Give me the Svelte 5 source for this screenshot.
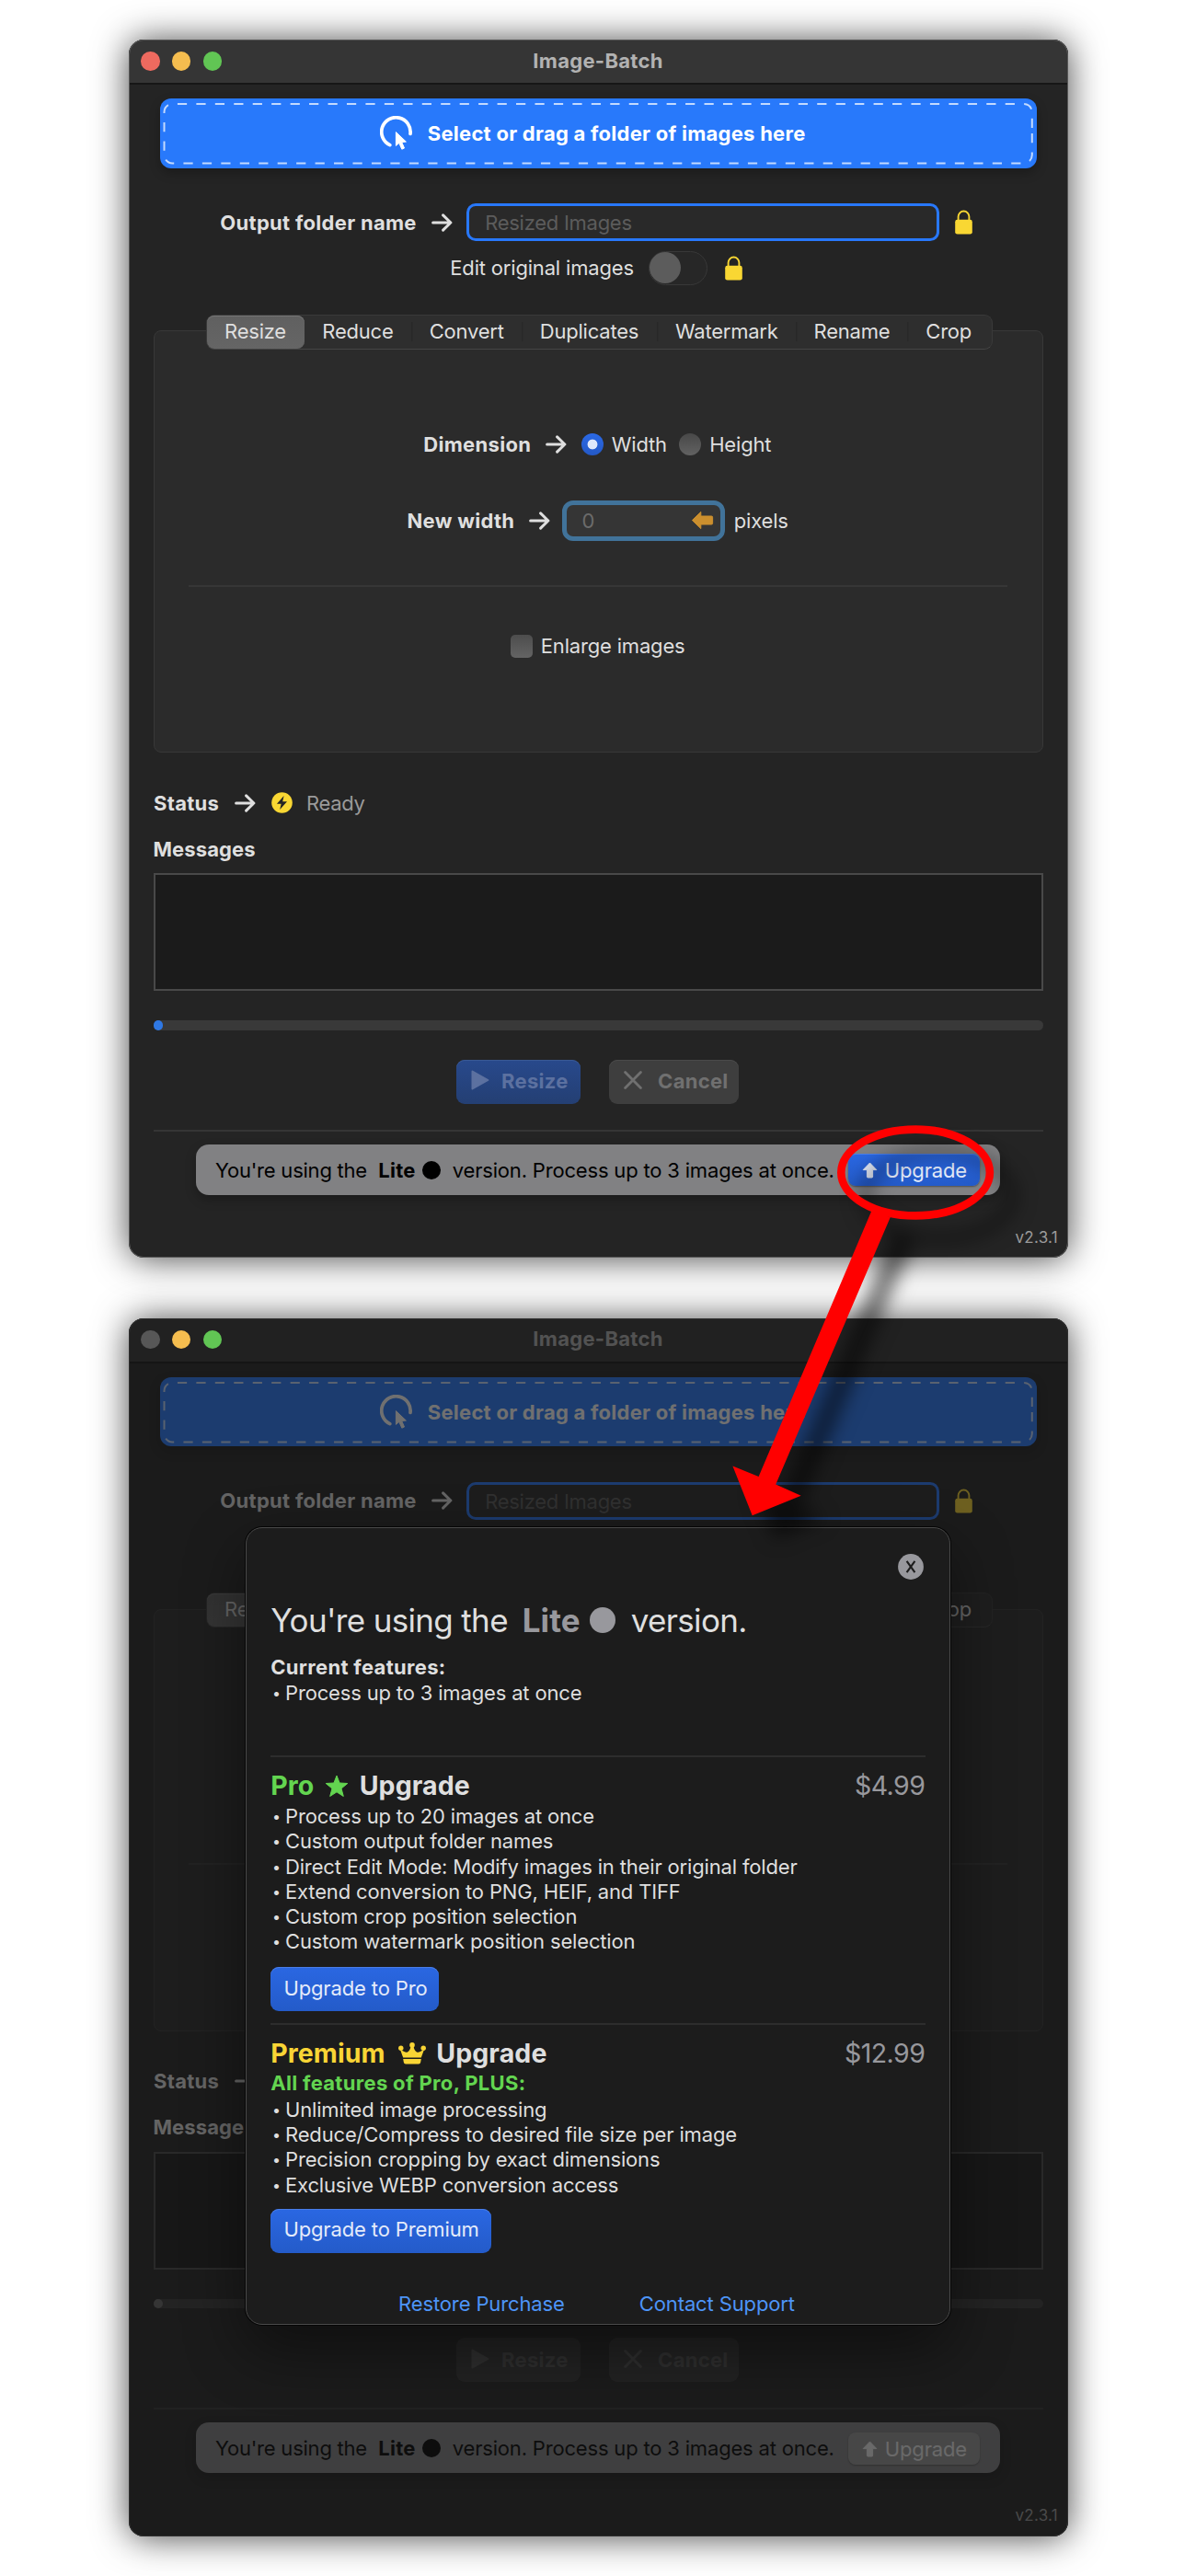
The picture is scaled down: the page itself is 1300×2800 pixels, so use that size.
<script>
  const tabs = ['Resize', 'Reduce', 'Convert', 'Duplicates', 'Watermark', 'Rename', 'Crop'];

  const proFeatures = [
    'Process up to 20 images at once',
    'Custom output folder names',
    'Direct Edit Mode: Modify images in their original folder',
    'Extend conversion to PNG, HEIF, and TIFF',
    'Custom crop position selection',
    'Custom watermark position selection'
  ];

  const premiumFeatures = [
    'Unlimited image processing',
    'Reduce/Compress to desired file size per image',
    'Precision cropping by exact dimensions',
    'Exclusive WEBP conversion access'
  ];
</script>

{#snippet arrow()}
  <svg class="arrow" width="23" height="20" viewBox="0 0 23 20">
    <path d="M1.6 10H20.6M12.6 1.9L20.9 10L12.6 18.1" />
  </svg>
{/snippet}

{#snippet lock()}
  <svg class="lock" width="19" height="27" viewBox="0 0 19 27">
    <path class="shackle" d="M3.6 12V7.6a5.9 6.1 0 0 1 11.8 0V12" />
    <rect x="0.2" y="10.8" width="18.6" height="15.8" rx="2.4" />
  </svg>
{/snippet}

{#snippet features(items)}
  <ul>
    {#each items as item}
      <li><span class="bullet">•</span>{item}</li>
    {/each}
  </ul>
{/snippet}

{#snippet appWindow(locked)}
  <header class="titlebar">
    <div class="lights">
      <i class="light" class:red={!locked} class:off={locked}></i>
      <i class="light yellow"></i>
      <i class="light green"></i>
    </div>
    <b class="title">Image-Batch</b>
  </header>

  <div class="drop">
    <svg class="dashes" width="953" height="76" viewBox="0 0 953 76">
      <path d="M947.8 38V61.5a9 9 0 0 1 -9 9H13.5a9 9 0 0 1 -9 -9V14.9a9 9 0 0 1 9 -9H938.8a9 9 0 0 1 9 9V38" />
    </svg>
    <svg class="pick" width="36" height="38" viewBox="0 0 36 38">
      <path class="ring" d="M33 19.4A15.7 15.7 0 1 0 10.8 31.6" />
      <path class="pointer" d="M17.4 17.6V32.4L20.8 29.5L23.8 36.2L26.5 35L23.7 28.5L28.4 28.1Z" />
    </svg>
    <b>Select or drag a folder of images here</b>
  </div>

  <div class="output">
    <b>Output folder name</b>
    {@render arrow()}
    <div class="field">Resized Images</div>
    {@render lock()}
  </div>

  <div class="edit">
    <span>Edit original images</span>
    <div class="toggle"><i></i></div>
    {@render lock()}
  </div>

  <nav class="tabs">
    {#each tabs as tab, i}
      <div class="tab" class:active={i === 0} class:ruled={i > 1}><span>{tab}</span></div>
    {/each}
  </nav>

  <section class="panel">
    <div class="dimension">
      <b>Dimension</b>
      {@render arrow()}
      <i class="radio on"></i>
      <span class="w">Width</span>
      <i class="radio"></i>
      <span>Height</span>
    </div>
    <div class="new-width">
      <b>New width</b>
      {@render arrow()}
      <div class="number">
        <span>0</span>
        <svg width="25" height="21" viewBox="0 0 25 21">
          <path d="M1.4 10.5L10.8 1.4V6H22.4Q23.6 6 23.6 7.2V13.8Q23.6 15 22.4 15H10.8V19.6Z" />
        </svg>
      </div>
      <span class="unit">pixels</span>
    </div>
    <hr />
    <div class="enlarge">
      <i class="check"></i>
      <span>Enlarge images</span>
    </div>
  </section>

  <div class="status">
    <b>Status</b>
    {@render arrow()}
    <svg class="bolt" width="23" height="23" viewBox="0 0 23 23">
      <circle cx="11.5" cy="11.5" r="11.3" />
      <path d="M13.6 3.9L5.9 12.7H10.6L9.2 19.1L17 10.3H12.2Z" />
    </svg>
    <span>Ready</span>
  </div>

  <b class="messages-label">Messages</b>
  <div class="messages"></div>
  <div class="progress"><i class:idle={locked}></i></div>

  <div class="actions">
    <div class="action run" class:inactive={locked}>
      <svg width="20" height="22" viewBox="0 0 20 22">
        <path d="M1.5 1.5L18.4 11L1.5 20.5Z" />
      </svg>
      <b>Resize</b>
    </div>
    <div class="action cancel" class:inactive={locked}>
      <svg width="20" height="20" viewBox="0 0 20 20">
        <path d="M1.6 1.6L18.4 18.4M18.4 1.6L1.6 18.4" />
      </svg>
      <b>Cancel</b>
    </div>
  </div>

  <hr class="rule" />

  <div class="banner">
    <span class="using">You're using the</span>
    <b>Lite</b>
    <i class="dot"></i>
    <span class="limit">version. Process up to 3 images at once.</span>
    <div class="upgrade" class:inactive={locked}>
      <svg width="17" height="18" viewBox="0 0 17 18">
        <path d="M8.5 1L15.8 8.6H11.6V16Q11.6 17 10.6 17H6.4Q5.4 17 5.4 16V8.6H1.2Z" />
      </svg>
      <span>Upgrade</span>
    </div>
  </div>
  <div class="version">v2.3.1</div>
{/snippet}

<main>
  <article class="window">{@render appWindow(false)}</article>

  <article class="window">
    {@render appWindow(true)}
    <div class="veil"></div>

    <aside class="modal">
      <div class="close">
        <svg width="28" height="28" viewBox="0 0 28 28">
          <circle cx="14" cy="14" r="13.9" />
          <path d="M9.6 7.9L18.4 20.1M18.4 7.9L9.6 20.1" />
        </svg>
      </div>
      <h1><span>You're using the</span><b>Lite</b><i></i><span>version.</span></h1>
      <p class="current">Current features:</p>
      {@render features(['Process up to 3 images at once'])}

      <hr class="first" />
      <h2>
        <b class="pro">Pro</b>
        <svg class="star" width="26" height="25" viewBox="0 0 26 25">
          <path d="M13 1.1L16.1 9L24.8 9.5L18 15L20.3 23.5L13 18.8L5.7 23.5L8 15L1.2 9.5L9.9 9Z" />
        </svg>
        <b>Upgrade</b>
        <span class="price">$4.99</span>
      </h2>
      {@render features(proFeatures)}
      <div class="buy">Upgrade to Pro</div>

      <hr class="second" />
      <h2>
        <b class="premium">Premium</b>
        <svg class="crown" width="30" height="24" viewBox="0 0 30 24">
          <circle cx="2.8" cy="6.2" r="2.7" />
          <circle cx="15" cy="2.9" r="2.8" />
          <circle cx="27.2" cy="6.2" r="2.7" />
          <path d="M1.8 7.2L5.2 16.4H24.8L28.2 7.2Q22.5 11.6 20 10.4Q17.2 9 16.3 3.5H13.7Q12.8 9 10 10.4Q7.5 11.6 1.8 7.2Z" />
          <path d="M5.2 17.9H24.8L24.2 21.6Q23.9 23.5 22 23.5H8Q6.1 23.5 5.8 21.6Z" />
        </svg>
        <b>Upgrade</b>
        <span class="price">$12.99</span>
      </h2>
      <p class="plus">All features of Pro, PLUS:</p>
      {@render features(premiumFeatures)}
      <div class="buy">Upgrade to Premium</div>

      <footer>
        <span>Restore Purchase</span>
        <span>Contact Support</span>
      </footer>
    </aside>
  </article>

  <!-- Red callout that links the Upgrade button to the dialog it opens -->
  <svg class="callout" width="1300" height="2800" viewBox="0 0 1300 2800">
    <ellipse cx="995.1" cy="1274.5" rx="80.8" ry="46.9" />
    <path d="M947.4 1316L824.6 1605L796.4 1593.5L817.7 1647.3L870.7 1625.7L843.2 1613.4L967.8 1323Z" />
  </svg>
</main>

<style>
  :global(body) {
    margin: 0;
    background: #fff;
  }

  main {
    position: relative;
    box-sizing: border-box;
    width: 1300px;
    height: 2800px;
    padding: 43px 0 0 139.5px;
    display: flex;
    flex-direction: column;
    gap: 65.5px;
    overflow: hidden;
    font: 420 22px/28px Inter, "Liberation Sans", sans-serif;
    letter-spacing: -0.18px;
    color: #dfdfdf;
  }

  main :is(b) {
    font-weight: 700;
    letter-spacing: 0.3px;
  }

  i {
    flex: none;
  }

  svg {
    flex: none;
    display: block;
  }

  hr {
    flex: none;
    height: 2px;
    margin: 0;
    border: 0;
    background: #353535;
  }

  .window {
    position: relative;
    flex: none;
    display: flex;
    flex-direction: column;
    width: 1021px;
    height: 1324px;
    border-radius: 16px;
    background: #242424;
    white-space: nowrap;
    box-shadow: 0 1px 38px rgba(0, 0, 0, 0.72);
  }

  .window::after {
    content: '';
    position: absolute;
    inset: 0;
    border: 1.5px solid #575757;
    border-radius: 16px;
    pointer-events: none;
  }

  .titlebar {
    flex: none;
    box-sizing: border-box;
    height: 49px;
    display: grid;
    grid-template-columns: 1fr auto 1fr;
    align-items: center;
    padding: 0 13.5px;
    border-bottom: 2px solid #161616;
    border-radius: 16px 16px 0 0;
    background: #353535;
  }

  .title {
    padding-bottom: 2px;
    color: #b2b2b2;
  }

  .lights {
    position: relative;
    z-index: 2;
    display: flex;
    gap: 13.3px;
  }

  .light {
    width: 20.6px;
    height: 20.6px;
    border-radius: 50%;
  }

  .red { background: #ee6a5f; }
  .off { background: #575757; }
  .yellow { background: #f5bd4f; }
  .green { background: #61c554; }

  .drop {
    position: relative;
    flex: none;
    box-sizing: border-box;
    display: flex;
    align-items: center;
    gap: 16.3px;
    width: 953px;
    height: 75.5px;
    margin: 15.3px 0 0 34.5px;
    padding-left: 238.5px;
    border-radius: 12px;
    background: #2879fb;
    color: #fff;
    box-shadow: 0 5px 12px rgba(0, 0, 0, 0.25);
  }

  .dashes {
    position: absolute;
    inset: 0;
    fill: none;
    stroke: rgba(255, 255, 255, 0.72);
    stroke-width: 2;
    stroke-dasharray: 10.225;
  }

  .ring {
    fill: none;
    stroke: #fff;
    stroke-width: 3.7;
    stroke-linecap: round;
  }

  .pointer {
    fill: #fff;
    stroke: #fff;
    stroke-linejoin: round;
  }

  .drop b {
    letter-spacing: 0.26px;
  }

  .arrow {
    fill: none;
    stroke: #dfdfdf;
    stroke-width: 3;
    stroke-linecap: round;
    stroke-linejoin: round;
  }

  .lock {
    fill: #f9d733;
  }

  .shackle {
    fill: none;
    stroke: #f9d733;
    stroke-width: 1.9;
  }

  .output {
    display: flex;
    align-items: center;
    height: 41px;
    margin: 38.7px 0 0 99.8px;
  }

  .output .arrow {
    margin: 0 14.8px 0 16.6px;
  }

  .field {
    box-sizing: border-box;
    width: 513.5px;
    height: 41px;
    margin-right: 17px;
    padding: 4px 0 0 17px;
    border: 3px solid #2878fb;
    border-radius: 10px;
    background: #292929;
    color: #5c5c5c;
    letter-spacing: -0.27px;
  }

  .edit {
    display: flex;
    align-items: center;
    height: 37px;
    margin: 10.3px 0 0 349.8px;
  }

  .edit span {
    width: 201px;
  }

  .toggle {
    box-sizing: border-box;
    width: 64px;
    height: 37px;
    margin: 0 19px 0 15px;
    border: 1px solid #383838;
    border-radius: 19px;
    background: #272727;
  }

  .toggle i {
    display: block;
    width: 34px;
    height: 34px;
    margin-top: 0.5px;
    border-radius: 50%;
    background: #5c5c5c;
  }

  .tabs {
    position: relative;
    flex: none;
    box-sizing: border-box;
    display: grid;
    grid-template-columns: 106px 116.9px 119.5px 147.2px 151.4px 120.9px 1fr;
    width: 855.5px;
    height: 38px;
    margin: 32px 0 0 84px;
    border: 1px solid #393939;
    border-bottom: 1.5px solid #454545;
    border-radius: 9px;
    background: #2e2e2e;
    letter-spacing: -0.22px;
  }

  .tab {
    display: flex;
    align-items: center;
    justify-content: center;
    padding-bottom: 2px;
  }

  .tab.active {
    border-radius: 8px;
    background: linear-gradient(#606060, #656565);
    box-shadow: inset 0 1px 0 #757575;
  }

  .tab.ruled {
    background: linear-gradient(#282828, #282828) 0 50% / 1.5px 21px no-repeat;
  }

  .tab:last-child span {
    margin-right: 2px;
  }

  .panel {
    flex: none;
    box-sizing: border-box;
    width: 967px;
    height: 459px;
    margin: -20.4px 0 0 27px;
    border: 1.3px solid #383838;
    border-radius: 8px;
    background: #2b2b2b;
  }

  .dimension,
  .new-width,
  .enlarge {
    display: flex;
    align-items: center;
  }

  .dimension {
    height: 28px;
    margin: 108.5px 0 0 292.8px;
  }

  .dimension .arrow {
    margin: 0 16px 0 15.6px;
  }

  .radio {
    width: 24px;
    height: 24px;
    margin-right: 9px;
    border-radius: 50%;
    background: linear-gradient(#484848, #626262);
  }

  .radio.on {
    background: radial-gradient(circle, #dfe8fb 5px, transparent 5.8px), linear-gradient(#2b69e6, #2459c6);
  }

  .w {
    width: 60px;
    margin-right: 13.4px;
  }

  .new-width {
    height: 44.7px;
    margin: 46.7px 0 0 275px;
  }

  .new-width .arrow {
    margin: 0 12.7px 0 16px;
  }

  .number {
    box-sizing: border-box;
    display: flex;
    align-items: center;
    justify-content: space-between;
    width: 177px;
    height: 44.7px;
    padding: 0 7.5px 0 16.5px;
    border: 5.5px solid #41739a;
    border-radius: 12px;
    background: #353535;
    color: #6b6b6b;
  }

  .number svg {
    fill: #cb8f2e;
    stroke: #cb8f2e;
    stroke-linejoin: round;
  }

  .unit {
    margin-left: 9.7px;
  }

  .panel hr {
    margin: 47.3px 37.5px 0;
    background: #363636;
  }

  .enlarge {
    height: 26px;
    margin: 51.8px 0 0 387.3px;
  }

  .check {
    width: 24px;
    height: 24.5px;
    margin-right: 9px;
    border-radius: 5px;
    background: linear-gradient(#4d4d4d, #646464);
  }

  .status {
    display: flex;
    align-items: center;
    height: 28px;
    margin: 40.4px 0 0 27.5px;
  }

  .status .arrow {
    margin: 0 17.5px 0 16.5px;
  }

  .status span {
    margin-left: 14.8px;
    color: #9a9a9a;
    letter-spacing: -0.3px;
  }

  .bolt {
    fill: #f9d733;
  }

  .bolt path {
    fill: #242424;
  }

  .messages-label {
    margin: 22px 0 0 27px;
  }

  main .messages-label {
    letter-spacing: 0.1px;
  }

  .messages {
    flex: none;
    box-sizing: border-box;
    width: 967px;
    height: 128px;
    margin: 12.5px 0 0 27px;
    border: 2px solid #494949;
    background: #1b1b1b;
  }

  .progress {
    flex: none;
    width: 967px;
    height: 10.4px;
    margin: 32.2px 0 0 27px;
    border-radius: 6px;
    background: #393939;
  }

  .progress i {
    display: block;
    width: 10.6px;
    height: 10.4px;
    border-radius: 50%;
    background: #2f78e4;
  }

  .progress i.idle {
    background: #686868;
  }

  .actions {
    display: flex;
    gap: 31.3px;
    margin: 32px 0 0 356.5px;
  }

  .action {
    box-sizing: border-box;
    display: flex;
    align-items: center;
    height: 47.7px;
    padding: 0 0 1px 16px;
    border-radius: 9px;
  }

  .run {
    gap: 13px;
    width: 134.6px;
    background: linear-gradient(#28498c, #243f73);
    box-shadow: inset 0 1px 0 #3a5994;
    color: #5c71a0;
  }

  .cancel {
    gap: 17.2px;
    width: 141px;
    background: #3e3e3e;
    box-shadow: inset 0 1px 0 #4a4a4a;
    color: #707070;
  }

  .run svg {
    margin-top: -2px;
    fill: currentColor;
    stroke: currentColor;
    stroke-width: 2;
    stroke-linejoin: round;
  }

  .cancel svg {
    margin-top: -2px;
    fill: none;
    stroke: currentColor;
    stroke-width: 2.8;
    stroke-linecap: round;
  }

  .action.inactive {
    background: #383838;
    box-shadow: none;
    color: #565656;
  }

  .rule {
    width: 967px;
    margin: 28.3px 0 0 27px;
  }

  .banner {
    flex: none;
    box-sizing: border-box;
    display: flex;
    align-items: center;
    width: 874px;
    height: 55px;
    margin: 13.7px 0 0 73.5px;
    padding: 1px 0 0 21px;
    border-radius: 14px;
    background: #818183;
    color: #000;
    box-shadow: 0 5px 12px rgba(0, 0, 0, 0.25);
  }

  .using {
    width: 165.6px;
    margin-right: 11.6px;
    letter-spacing: -0.23px;
  }

  .dot {
    width: 20px;
    height: 20px;
    margin: 0 13px 0 7px;
    border-radius: 50%;
    background: #000;
  }

  .limit {
    width: 416.6px;
    margin-right: 14px;
  }

  .upgrade {
    box-sizing: border-box;
    display: flex;
    align-items: center;
    gap: 7.5px;
    width: 142.5px;
    height: 35px;
    padding: 1px 0 0 15px;
    border-radius: 8px;
    background: linear-gradient(#2a67e2, #245bc9);
    color: #e6edfb;
    box-shadow: 0 1px 2px rgba(0, 0, 0, 0.4), inset 0 1px 0 #4d80e8;
  }

  .upgrade svg {
    fill: currentColor;
    stroke: currentColor;
    stroke-linejoin: round;
  }

  .upgrade.inactive {
    background: #969696;
    box-shadow: 0 1px 2px rgba(0, 0, 0, 0.3);
    color: #ececec;
  }

  .version {
    align-self: flex-end;
    margin: 36px 10.5px 0 0;
    font-size: 17px;
    line-height: 20px;
    letter-spacing: 0.28px;
    color: #9b9b9b;
  }

  .veil {
    position: absolute;
    inset: 0;
    z-index: 1;
    border-radius: 16px;
    background: rgba(21, 21, 21, 0.61);
  }

  .modal {
    position: absolute;
    z-index: 3;
    top: 227.7px;
    left: 127.5px;
    box-sizing: border-box;
    display: flex;
    flex-direction: column;
    width: 766px;
    height: 866.5px;
    padding: 27.7px 26.3px 0 26.2px;
    border: 1.7px solid #4a4a4a;
    border-radius: 18px;
    background: #1c1c1c;
    box-shadow: 0 0 0 1px #050505, 0 26px 66px rgba(0, 0, 0, 0.45);
  }

  .close {
    display: flex;
    justify-content: flex-end;
    margin-right: 2.2px;
  }

  .close circle {
    fill: #98989d;
  }

  .close path {
    stroke: #1c1c1c;
    stroke-width: 2.1;
  }

  h1,
  h2,
  p,
  ul {
    margin: 0;
    padding: 0;
  }

  h1 {
    display: flex;
    align-items: center;
    margin-top: 22.3px;
    font-size: 35px;
    font-weight: 400;
    line-height: 44px;
    letter-spacing: -0.66px;
  }

  h1 b {
    margin-left: 15.8px;
    color: #98989d;
  }

  main h1 b {
    letter-spacing: 0.1px;
  }

  h1 i {
    width: 28px;
    height: 28px;
    margin: 0 17px 0 10px;
    border-radius: 50%;
    background: #98989d;
  }

  .current,
  .plus {
    font-weight: 700;
    line-height: 27.25px;
    letter-spacing: 0.32px;
  }

  .current {
    margin-top: 16.3px;
  }

  .plus {
    margin: 1.5px 0 -1px;
    color: #63d550;
  }

  ul {
    margin-top: 2.8px;
    list-style: none;
    line-height: 27.25px;
    letter-spacing: -0.16px;
  }

  .current + ul {
    margin-top: 0.4px;
  }

  li {
    display: flex;
  }

  .bullet {
    width: 14px;
    padding-left: 1.8px;
    font-size: 16px;
  }

  .modal hr {
    background: #2d2d2d;
  }

  .first {
    margin-top: 54px;
  }

  .second {
    margin-top: 13px;
  }

  h2 {
    display: flex;
    align-items: center;
    height: 34px;
    margin-top: 14px;
    font-size: 28.5px;
    font-weight: 400;
    line-height: 34px;
  }

  main h2 b {
    letter-spacing: 0.1px;
  }

  .pro {
    color: #63d550;
  }

  .premium {
    color: #f9d535;
  }

  .star {
    margin: 0 11.3px 0 12px;
    fill: #63d550;
    stroke: #63d550;
    stroke-linejoin: round;
  }

  .crown {
    margin: 0 11.5px 0 14px;
    fill: #f9d535;
  }

  .price {
    margin-left: auto;
    padding-right: 0.4px;
    color: #98989d;
    letter-spacing: -0.55px;
  }

  .buy {
    align-self: flex-start;
    flex: none;
    box-sizing: border-box;
    height: 48px;
    margin-top: 13.7px;
    padding: 8.5px 12.8px 0 14.2px;
    border-radius: 9px;
    background: linear-gradient(#2a67e2, #245bc9);
    box-shadow: inset 0 1px 0 #4a7de6;
    color: #e4ebfa;
    letter-spacing: -0.12px;
  }

  .plus ~ .buy {
    margin-top: 12px;
  }

  footer {
    display: flex;
    gap: 81px;
    margin: 41px 0 0 138.8px;
    color: #4d94f7;
    letter-spacing: -0.12px;
  }

  .callout {
    position: absolute;
    inset: 0;
    z-index: 4;
    filter: drop-shadow(25px 25px 10px rgba(0, 0, 0, 0.55));
  }

  .callout ellipse {
    fill: none;
    stroke: #f00;
    stroke-width: 8.6;
  }

  .callout path {
    fill: #f00;
  }
</style>
